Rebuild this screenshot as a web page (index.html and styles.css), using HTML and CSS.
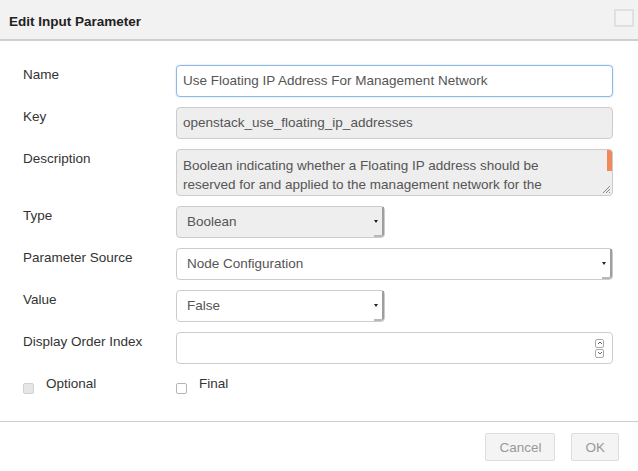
FILE: index.html
```html
<!DOCTYPE html>
<html>
<head>
<meta charset="utf-8">
<link rel="stylesheet" href="styles.css">
</head>
<body>
<div class="dialog">
  <div class="header">
    <h1 class="title">Edit Input Parameter</h1>
    <span class="close"></span>
  </div>
  <div class="body">
    <div class="form">
      <div class="label">Name</div>
      <div class="field input focus">Use Floating IP Address For Management Network</div>

      <div class="label">Key</div>
      <div class="field input disabled">openstack_use_floating_ip_addresses</div>

      <div class="label">Description</div>
      <div class="field textarea disabled">
        Boolean indicating whether a Floating IP address should be reserved for and applied to the management network for the
        <span class="thumb"></span>
        <svg class="grip" width="10" height="10" viewBox="0 0 10 10"><path d="M9 2 L2 9 M9 5 L5 9 M9 8 L8 9" stroke="#888" stroke-width="1" fill="none"/></svg>
      </div>

      <div class="label">Type</div>
      <div class="field select short disabled"><span class="select-text">Boolean</span><span class="select-btn"><span class="tri"></span></span></div>

      <div class="label">Parameter Source</div>
      <div class="field select"><span class="select-text">Node Configuration</span><span class="select-btn"><span class="tri"></span></span></div>

      <div class="label">Value</div>
      <div class="field select short"><span class="select-text">False</span><span class="select-btn"><span class="tri"></span></span></div>

      <div class="label">Display Order Index</div>
      <div class="field input number">
        <span class="spin">
          <span class="spin-box"><svg width="6" height="6" viewBox="0 0 6 6"><path d="M1 4 L3 2 L5 4" stroke="#666" stroke-width="1" fill="none"/></svg></span>
          <span class="spin-box"><svg width="6" height="6" viewBox="0 0 6 6"><path d="M1 2 L3 4 L5 2" stroke="#666" stroke-width="1" fill="none"/></svg></span>
        </span>
      </div>

      <div class="check"><span class="box box-disabled"></span><span class="check-text">Optional</span></div>
      <div class="check"><span class="box"></span><span class="check-text">Final</span></div>
    </div>
  </div>
  <div class="footer">
    <button class="btn">Cancel</button>
    <button class="btn">OK</button>
  </div>
</div>
</body>
</html>
```
FILE: styles.css
```css
* { box-sizing: border-box; }
html, body { margin: 0; padding: 0; background: #fff; }
body {
  font-family: "Liberation Sans", Arial, sans-serif;
  font-size: 13.5px;
  color: #333;
}
.dialog { width: 638px; height: 471px; display: flex; flex-direction: column; }
.header {
  height: 41px;
  background: #f2f2f2;
  border-bottom: 2px solid #cfcfcf;
  display: flex;
  justify-content: space-between;
  align-items: flex-start;
  padding: 0 4px 0 9px;
}
.title {
  margin: 12px 0 0 0;
  font-size: 13.5px;
  line-height: 19px;
  font-weight: bold;
  color: #222;
}
.close {
  margin-top: 9px;
  width: 20px;
  height: 18px;
  border: 2px solid #e0e0e0;
  background: #f4f4f4;
}
.body { padding: 24px 25px 0 23px; height: 380px; }
.form {
  display: grid;
  grid-template-columns: 153px 1fr;
  row-gap: 10px;
  align-items: start;
}
.label { line-height: 19px; margin-top: 0; color: #333; }
.field {
  border: 1px solid #ccc;
  border-radius: 4px;
  color: #555;
  background: #fff;
}
.input {
  height: 32px;
  line-height: 30px;
  padding: 0 6px;
  white-space: nowrap;
  overflow: hidden;
}
.focus { border-color: #8db8e8; box-shadow: 0 0 2px rgba(102,175,233,0.45); }
.disabled { background: #eee; }
.textarea {
  position: relative;
  height: 47px;
  padding: 6px 30px 0 6px;
  line-height: 19px;
  overflow: hidden;
}
.thumb {
  position: absolute;
  right: 0;
  top: 0;
  width: 5px;
  height: 21px;
  background: #f08a5d;
}
.grip { position: absolute; right: 1px; bottom: 1px; }
.select {
  height: 32px;
  display: flex;
  align-items: stretch;
}
.short { width: 209px; }
.select-text { flex: 1; line-height: 30px; padding-left: 10px; }
.select-btn {
  width: 10px;
  border-right: 2px solid #9e9e9e;
  border-bottom: 2px solid #b8b8b8;
  border-bottom-right-radius: 3px;
  display: flex;
  align-items: center;
  justify-content: flex-start;
}
.tri {
  width: 0;
  height: 0;
  border-left: 2.5px solid transparent;
  border-right: 2.5px solid transparent;
  border-top: 3px solid #222;
  margin-top: 1px;
}
.number { display: flex; justify-content: flex-end; align-items: center; padding-right: 8px; }
.spin { display: flex; flex-direction: column; gap: 1px; }
.spin-box {
  width: 9px;
  height: 9px;
  border: 1px solid #aaa;
  border-radius: 2px;
  display: flex;
  align-items: center;
  justify-content: center;
}
.check { display: flex; align-items: flex-start; line-height: 19px; }
.box {
  width: 11px;
  height: 11px;
  margin-top: 9px;
  border: 1px solid #b5b5b5;
  border-radius: 2px;
  background: #fff;
  margin-right: 12px;
}
.box-disabled { background: #e6e6e6; border-color: #d0d0d0; }
.check-text { color: #333; }
.footer {
  border-top: 1px solid #ccc;
  padding: 11px 19px 0 0;
  display: flex;
  justify-content: flex-end;
  gap: 16px;
}
.btn {
  height: 28px;
  padding: 0 13px;
  border: 1px solid #ddd;
  border-radius: 2px;
  background: #f4f4f4;
  color: #999;
  font-family: "Liberation Sans", Arial, sans-serif;
  font-size: 13.5px;
}
```
